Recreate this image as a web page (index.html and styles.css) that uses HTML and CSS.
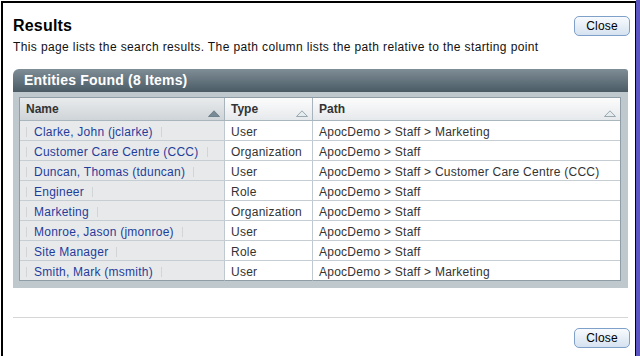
FILE: index.html
```html
<!DOCTYPE html>
<html lang="en">
<head>
<meta charset="utf-8">
<title>Results</title>
<link rel="stylesheet" href="styles.css">
</head>
<body>
<div class="screen">
  <div class="window">
    <div class="titlebar">
      <h1 class="title">Results</h1>
      <button class="btn" type="button">Close</button>
    </div>
    <p class="desc">This page lists the search results. The path column lists the path relative to the starting point</p>
    <div class="panel">
      <div class="panel-head">Entities Found (8 Items)</div>
      <div class="panel-body">
        <table class="grid">
          <colgroup>
            <col class="c-name">
            <col class="c-type">
            <col class="c-path">
          </colgroup>
          <thead>
            <tr>
              <th class="sorted"><div class="hcell"><span>Name</span><svg class="sort" width="12" height="7" viewBox="0 0 12 7"><path d="M0.5 6.5 L6 0.8 L11.5 6.5 Z" fill="#788b95" stroke="#6f828c" stroke-width="1"/></svg></div></th>
              <th><div class="hcell"><span>Type</span><svg class="sort" width="12" height="7" viewBox="0 0 12 7"><path d="M0.5 6.5 L6 0.8 L11.5 6.5 Z" fill="#e6ebee" stroke="#98a7b0" stroke-width="1"/></svg></div></th>
              <th class="last"><div class="hcell"><span>Path</span><svg class="sort" width="12" height="7" viewBox="0 0 12 7"><path d="M0.5 6.5 L6 0.8 L11.5 6.5 Z" fill="#e6ebee" stroke="#98a7b0" stroke-width="1"/></svg></div></th>
            </tr>
          </thead>
          <tbody>
            <tr><td class="name"><div class="lnk"><a href="#">Clarke, John (jclarke)</a></div></td><td class="type">User</td><td>ApocDemo &gt; Staff &gt; Marketing</td></tr>
            <tr><td class="name"><div class="lnk"><a href="#">Customer Care Centre (CCC)</a></div></td><td class="type">Organization</td><td>ApocDemo &gt; Staff</td></tr>
            <tr><td class="name"><div class="lnk"><a href="#">Duncan, Thomas (tduncan)</a></div></td><td class="type">User</td><td>ApocDemo &gt; Staff &gt; Customer Care Centre (CCC)</td></tr>
            <tr><td class="name"><div class="lnk"><a href="#">Engineer</a></div></td><td class="type">Role</td><td>ApocDemo &gt; Staff</td></tr>
            <tr><td class="name"><div class="lnk"><a href="#">Marketing</a></div></td><td class="type">Organization</td><td>ApocDemo &gt; Staff</td></tr>
            <tr><td class="name"><div class="lnk"><a href="#">Monroe, Jason (jmonroe)</a></div></td><td class="type">User</td><td>ApocDemo &gt; Staff</td></tr>
            <tr><td class="name"><div class="lnk"><a href="#">Site Manager</a></div></td><td class="type">Role</td><td>ApocDemo &gt; Staff</td></tr>
            <tr class="lastrow"><td class="name"><div class="lnk"><a href="#">Smith, Mark (msmith)</a></div></td><td class="type">User</td><td>ApocDemo &gt; Staff &gt; Marketing</td></tr>
          </tbody>
        </table>
      </div>
    </div>
    <div class="divider"></div>
    <div class="footer">
      <button class="btn" type="button">Close</button>
    </div>
  </div>
  <div class="edge"></div>
</div>
</body>
</html>
```
FILE: styles.css
```css
html, body {
  margin: 0;
  padding: 0;
  background: #ffffff;
  font-family: "Liberation Sans", Arial, Helvetica, sans-serif;
}

.screen {
  display: flex;
  height: 356px;
  overflow: hidden;
}

.window {
  flex: 1;
  margin: 1px 0 0 1px;
  border-top: 2px solid #000;
  border-left: 2px solid #000;
  border-right: 1px solid #000;
  padding: 13px 5px 0 10px;
  background: #fff;
}

.edge {
  width: 4px;
  background: #5a55c3;
}

.titlebar {
  display: flex;
  justify-content: space-between;
  align-items: flex-start;
}

.title {
  margin: 0;
  font-size: 16px;
  line-height: 20px;
  font-weight: bold;
  color: #000;
  letter-spacing: 0.2px;
}

.btn {
  width: 56px;
  height: 20px;
  padding: 0;
  border: 1px solid #7fa0c8;
  border-radius: 5px;
  background: linear-gradient(#f8fbfe, #d5e2f0);
  font-family: "Liberation Sans", Arial, sans-serif;
  font-size: 12px;
  line-height: 18px;
  color: #000;
  letter-spacing: 0.2px;
}

.desc {
  margin: 4px 0 0;
  font-size: 12px;
  line-height: 14px;
  letter-spacing: 0.38px;
  color: #111;
}

.panel {
  margin: 15px 2px 0 0;
}

.panel-head {
  height: 23px;
  line-height: 23px;
  padding-left: 11px;
  color: #fff;
  font-size: 14px;
  font-weight: bold;
  letter-spacing: 0.2px;
  border-radius: 6px 3px 0 0;
  background: linear-gradient(#7f8d96, #4a5b65);
}

.panel-body {
  background: #bfc8cd;
  padding: 5px 7px 7px 6px;
}

.grid {
  width: 602px;
  table-layout: fixed;
  border-collapse: separate;
  border-spacing: 0;
  border: 1px solid #8f9da7;
  border-bottom: 0;
  background: #fff;
  font-size: 12px;
  letter-spacing: 0.25px;
  color: #333;
}

.c-name { width: 205px; }
.c-type { width: 88px; }
.c-path { width: 307px; }

.grid th {
  padding: 0;
  text-align: left;
  font-weight: bold;
  color: #333;
  letter-spacing: 0;
  border-bottom: 1px solid #aab6be;
  border-right: 1px solid #a8b4bc;
  background: linear-gradient(#fcfcfc, #e6e9ec);
}

.grid th.sorted {
  background: linear-gradient(#e9ebed, #cfd4d8);
}

.grid th.last {
  border-right: 0;
}

.hcell {
  display: flex;
  height: 22px;
  align-items: center;
  justify-content: space-between;
  padding: 0 4px 0 6px;
  line-height: 14px;
}

.sort {
  align-self: flex-end;
  margin-bottom: 3px;
  flex: none;
}

.grid td {
  padding: 3px 6px 0;
  line-height: 16px;
  white-space: nowrap;
  overflow: hidden;
  border-bottom: 1px solid #c6ced4;
}

.grid td.name {
  background: #e8e9eb;
  border-right: 1px solid #c0c9d0;
}

.grid td.type {
  border-right: 1px solid #c0c9d0;
}

.grid tr.lastrow td {
  border-bottom-color: #8f9da7;
}

.lnk {
  display: flex;
  align-items: center;
}

.lnk::before,
.lnk::after {
  content: "";
  width: 1px;
  height: 10px;
  background: #d2d5d8;
  flex: none;
}

.lnk::before {
  margin-right: 7px;
}

.lnk::after {
  margin-left: 8px;
}

.lnk a {
  color: #1f3d9b;
  text-decoration: none;
}

.divider {
  margin: 29px 2px 0 0;
  height: 1px;
  background: #d6d6d6;
}

.footer {
  display: flex;
  justify-content: flex-end;
  padding-top: 10px;
}
```
